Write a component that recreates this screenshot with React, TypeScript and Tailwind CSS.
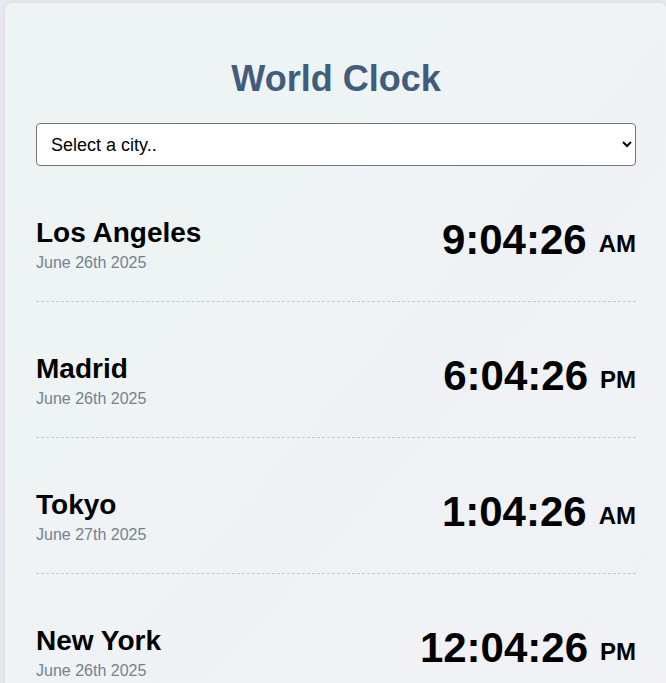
import React from "react";

const rows = [
  { city: "Los Angeles", date: "June 26th 2025", time: "9:04:26", ampm: "AM" },
  { city: "Madrid", date: "June 26th 2025", time: "6:04:26", ampm: "PM" },
  { city: "Tokyo", date: "June 27th 2025", time: "1:04:26", ampm: "AM" },
  { city: "New York", date: "June 26th 2025", time: "12:04:26", ampm: "PM" },
];

export default function App() {
  return (
    <div
      className="h-[683px] w-[666px] overflow-hidden bg-[#e9e8f1] pl-[5px] pt-[3px]"
      style={{ fontFamily: '"Liberation Sans", Arial, sans-serif' }}
    >
      <div className="w-[662px] rounded-[8px] bg-gradient-to-br from-[#edf4f3] to-[#f1f1f6] px-[31px] pt-[54px] pb-[40px] shadow-[0_0_6px_rgba(0,0,0,0.06)]">
        <h1 className="text-center text-[36px] font-bold leading-[43px] text-[#415c7c]">
          World Clock
        </h1>
        <select
          className="mt-[23px] block h-[43px] w-[600px] rounded-[4px] border border-[#767676] bg-white pl-[10px] pr-[8px] text-[18px] text-black"
          defaultValue=""
        >
          <option value="">Select a city..</option>
          <option>Los Angeles</option>
          <option>Madrid</option>
          <option>Tokyo</option>
          <option>New York</option>
        </select>
        <div className="w-[600px]">
          {rows.map((r) => (
            <div
              key={r.city}
              className="flex items-start justify-between border-b border-dashed border-[#c4c8cc] pt-[50px] pb-[28px]"
            >
              <div className="flex flex-col">
                <span className="text-[28px] font-bold leading-[34px] text-black">
                  {r.city}
                </span>
                <span className="mt-[3px] text-[16px] leading-[20px] text-[#74828f]">
                  {r.date}
                </span>
              </div>
              <div className="mt-[3px] whitespace-nowrap text-black">
                <span className="text-[42px] font-bold leading-[42px]">{r.time}</span>
                <span className="ml-[12px] align-[2px] text-[24px] font-bold leading-[24px]">
                  {r.ampm}
                </span>
              </div>
            </div>
          ))}
        </div>
      </div>
    </div>
  );
}
